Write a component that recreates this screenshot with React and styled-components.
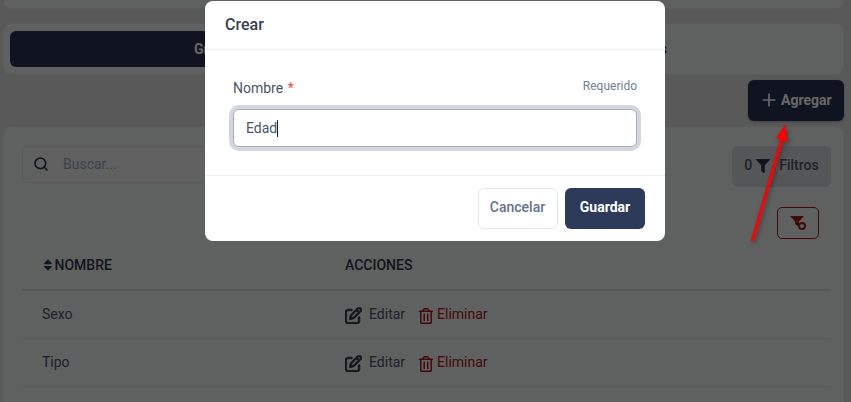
import React from 'react';
import styled, { createGlobalStyle } from 'styled-components';
import { FaSort, FaFilter, FaRegTrashAlt } from 'react-icons/fa';
import { FaRegPenToSquare } from 'react-icons/fa6';
import { Plus, Search } from 'lucide-react';

const GlobalStyle = createGlobalStyle`
  html, body {
    margin: 0;
    padding: 0;
    height: 100%;
    overflow: hidden;
    background: #dedfe1;
    font-family: Roboto, "Noto Sans", sans-serif;
  }
  * { box-sizing: border-box; }
`;

const rows = ['Sexo', 'Tipo'];

function FilterOffIcon() {
  return (
    <svg width="18" height="16" viewBox="0 0 18 16">
      <path d="M1 1h14l-5 5.6V12L6 9V6.6z" fill="#a51d1d" />
      <circle cx="13" cy="11" r="3" fill="#eeeff1" stroke="#a51d1d" strokeWidth="2" />
    </svg>
  );
}

function App() {
  return (
    <>
      <GlobalStyle />
      <Page>
        <TopCard />
        <TabsCard>
          <Tab $active>Grupos</Tab>
          <Tab>Parámetros</Tab>
        </TabsCard>
        <ActionBar>
          <AddButton>
            <Plus size={20} strokeWidth={2} />
            Agregar
          </AddButton>
        </ActionBar>
        <TableCard>
          <SearchRow>
            <SearchBox>
              <Search size={16} strokeWidth={2.5} color="#2d3748" />
              <SearchInput placeholder="Buscar..." readOnly />
            </SearchBox>
            <FilterButton>
              0 <FilterIcon size={14} /> Filtros
            </FilterButton>
          </SearchRow>
          <ClearRow>
            <ClearButton>
              <FilterOffIcon />
            </ClearButton>
          </ClearRow>
          <Table>
            <thead>
              <tr>
                <HeadCell $first>
                  <SortIcon /> NOMBRE
                </HeadCell>
                <HeadCell>ACCIONES</HeadCell>
              </tr>
            </thead>
            <tbody>
              {rows.map((row) => (
                <tr key={row}>
                  <Cell $first>{row}</Cell>
                  <Cell>
                    <Actions>
                      <ActionLink>
                        <FaRegPenToSquare size={17} />
                        <span>Editar</span>
                      </ActionLink>
                      <ActionLink $danger>
                        <FaRegTrashAlt size={16} />
                        <span>Eliminar</span>
                      </ActionLink>
                    </Actions>
                  </Cell>
                </tr>
              ))}
            </tbody>
          </Table>
        </TableCard>
      </Page>

      <Overlay>
        <Modal>
          <ModalHeader>Crear</ModalHeader>
          <ModalBody>
            <LabelRow>
              <Label>
                Nombre <Star>*</Star>
              </Label>
              <Hint>Requerido</Hint>
            </LabelRow>
            <NameInput>
              Edad<Caret />
            </NameInput>
          </ModalBody>
          <ModalFooter>
            <CancelButton>Cancelar</CancelButton>
            <SaveButton>Guardar</SaveButton>
          </ModalFooter>
        </Modal>
      </Overlay>

      <Arrow width="851" height="402" viewBox="0 0 851 402">
        <line x1="752" y1="241" x2="782" y2="138" stroke="#ff0000" strokeWidth="3" />
        <polygon points="785,124 776,138 787,143" fill="#ff0000" />
      </Arrow>
    </>
  );
}

const Page = styled.div`
  height: 402px;
  overflow: hidden;
  padding: 0 7px 0 3px;
`;

const TopCard = styled.div`
  height: 9px;
  background: #eeeff1;
  border: 1px solid #e3e4e6;
  border-top: 0;
  border-radius: 0 0 8px 8px;
`;

const TabsCard = styled.div`
  display: grid;
  grid-template-columns: 1fr 1fr;
  height: 52px;
  margin-top: 14px;
  padding: 7px 6px;
  background: #eeeff1;
  border: 1px solid #e3e4e6;
  border-radius: 8px;
`;

const Tab = styled.div`
  display: flex;
  align-items: center;
  justify-content: center;
  border-radius: 6px;
  font-size: 14px;
  font-weight: 700;
  color: ${(p) => (p.$active ? '#ffffff' : '#2a3450')};
  background: ${(p) => (p.$active ? '#2a3450' : 'transparent')};
`;

const ActionBar = styled.div`
  display: flex;
  justify-content: flex-end;
  height: 51px;
  padding-top: 5px;
`;

const AddButton = styled.button`
  display: flex;
  align-items: center;
  gap: 2px;
  width: 96px;
  height: 41px;
  padding: 0 0 2px 11px;
  border: 0;
  border-radius: 6px;
  background: #2a3450;
  color: #ffffff;
  font: 700 14px Roboto, sans-serif;
  box-shadow: 0 1px 3px rgba(0, 0, 0, 0.3);
`;

const TableCard = styled.div`
  height: 290px;
  padding: 19px 12px 0 18px;
  background: #eeeff1;
  border: 1px solid #e3e4e6;
  border-radius: 8px 8px 0 0;
`;

const SearchRow = styled.div`
  display: flex;
  justify-content: space-between;
`;

const SearchBox = styled.div`
  display: flex;
  align-items: center;
  gap: 12px;
  width: 400px;
  height: 37px;
  padding: 0 0 2px 10px;
  background: #f0f1f3;
  border: 1px solid #e0e1e4;
  border-radius: 5px;
`;

const SearchInput = styled.input`
  flex: 1;
  min-width: 0;
  border: 0;
  outline: none;
  background: transparent;
  font: 400 14px Roboto, sans-serif;
  &::placeholder { color: #98a2b3; }
`;

const FilterButton = styled.button`
  display: flex;
  align-items: center;
  justify-content: center;
  gap: 4px;
  width: 99px;
  height: 41px;
  padding: 0 0 3px;
  border: 0;
  border-radius: 6px;
  background: #d4d6da;
  color: #4a5568;
  font: 500 14px Roboto, sans-serif;
`;

const FilterIcon = styled(FaFilter)`
  margin: 2px 5px 0 0;
  color: #2a3450;
`;

const ClearRow = styled.div`
  display: flex;
  justify-content: flex-end;
  padding: 20px 12px 0 0;
`;

const ClearButton = styled.button`
  display: flex;
  align-items: center;
  justify-content: center;
  width: 42px;
  height: 32px;
  padding: 0;
  background: transparent;
  border: 1px solid #a51d1d;
  border-radius: 5px;
`;

const Table = styled.table`
  width: 809px;
  margin-top: 1px;
  border-collapse: collapse;
  table-layout: fixed;
  font-size: 14px;
`;

const HeadCell = styled.th`
  height: 50px;
  width: ${(p) => (p.$first ? '323px' : 'auto')};
  padding: 0 0 0 ${(p) => (p.$first ? '20px' : '0')};
  text-align: left;
  font-weight: 500;
  font-size: 14px;
  color: #2d3748;
  border-bottom: 2px solid #d8dadd;
`;

const SortIcon = styled(FaSort)`
  width: 12px;
  height: 14px;
  margin-right: -3px;
  vertical-align: -2px;
`;

const Cell = styled.td`
  height: 48px;
  padding: 0 0 0 ${(p) => (p.$first ? '20px' : '0')};
  color: #4a5568;
  border-bottom: 1px solid #dfe1e4;
`;

const Actions = styled.div`
  display: flex;
  align-items: center;
  gap: 13px;
`;

const ActionLink = styled.span`
  display: flex;
  align-items: center;
  gap: ${(p) => (p.$danger ? '3px' : '7px')};
  color: ${(p) => (p.$danger ? '#a51d1d' : '#4a5568')};
  svg {
    margin-top: 3px;
    color: ${(p) => (p.$danger ? '#a51d1d' : '#2d3748')};
    stroke-width: ${(p) => (p.$danger ? '0' : '24px')};
  }
`;

const Overlay = styled.div`
  position: fixed;
  inset: 0;
  padding: 1px 0 0 205px;
  background: rgba(0, 0, 0, 0.6);
  backdrop-filter: blur(0.4px);
`;

const Modal = styled.div`
  display: flex;
  flex-direction: column;
  width: 460px;
  height: 240px;
  background: #ffffff;
  border-radius: 8px;
`;

const ModalHeader = styled.div`
  height: 49px;
  padding: 0 20px 2px;
  display: flex;
  align-items: center;
  font-size: 16px;
  font-weight: 500;
  color: #374151;
  border-bottom: 1px solid #edf0f3;
`;

const ModalBody = styled.div`
  height: 126px;
  padding: 28px 28px 0;
  border-bottom: 1px solid #edf0f3;
`;

const LabelRow = styled.div`
  display: flex;
  justify-content: space-between;
  align-items: flex-start;
  height: 31px;
`;

const Label = styled.label`
  font-size: 14px;
  line-height: 20px;
  color: #4a5568;
`;

const Star = styled.span`
  margin-left: 1px;
  color: #ef4444;
`;

const Hint = styled.span`
  font-size: 12px;
  line-height: 16px;
  color: #718096;
`;

const NameInput = styled.div`
  display: flex;
  align-items: center;
  height: 38px;
  padding-left: 12px;
  background: #ffffff;
  border: 1px solid #a9afbc;
  border-radius: 6px;
  box-shadow: 0 0 0 4px #d3d6df;
  font-size: 14px;
  color: #4a5568;
`;

const Caret = styled.span`
  width: 1px;
  height: 17px;
  background: #1a202c;
`;

const ModalFooter = styled.div`
  display: flex;
  justify-content: flex-end;
  gap: 7px;
  padding: 12px 20px 0 0;
`;

const CancelButton = styled.button`
  width: 80px;
  height: 41px;
  padding: 0 1px 3px 0;
  background: #ffffff;
  border: 1px solid #e2e8f0;
  border-radius: 6px;
  color: #64748b;
  font: 500 14px Roboto, sans-serif;
`;

const SaveButton = styled.button`
  width: 80px;
  height: 41px;
  padding: 0 0 3px;
  background: #2d3a5a;
  border: 0;
  border-radius: 6px;
  color: #ffffff;
  font: 700 14px Roboto, sans-serif;
`;

const Arrow = styled.svg`
  position: fixed;
  left: 0;
  top: 0;
  pointer-events: none;
  filter: drop-shadow(2px 2px 2px rgba(0, 0, 0, 0.35));
`;

export default App;
